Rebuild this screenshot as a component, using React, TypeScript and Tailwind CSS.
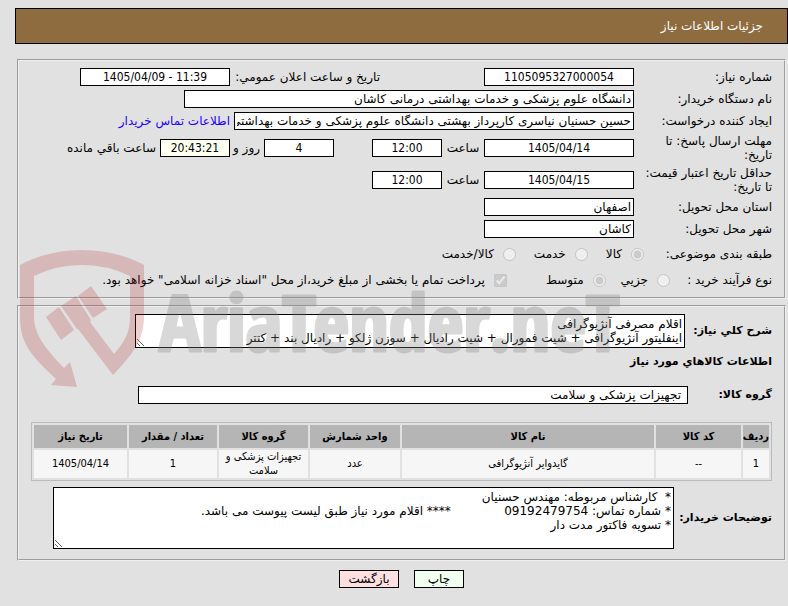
import { useId } from "react";
import type { InputHTMLAttributes, ReactNode } from "react";
import { clsx } from "clsx";

interface ItemRow {
  index: number;
  code: string;
  name: string;
  unit: string;
  group: string;
  amount: string;
  needDate: string;
}

const items: ItemRow[] = [
  {
    index: 1,
    code: "--",
    name: "گایدوایر آنژیوگرافی",
    unit: "عدد",
    group: "تجهیزات پزشکی و سلامت",
    amount: "1",
    needDate: "1405/04/14",
  },
];

const columns = [
  { label: "ردیف", className: "w-[26px]" },
  { label: "کد کالا", className: "w-[85px]" },
  { label: "نام کالا", className: "" },
  { label: "واحد شمارش", className: "w-[90px]" },
  { label: "گروه کالا", className: "w-[89px]" },
  { label: "تعداد / مقدار", className: "w-[88px]" },
  { label: "تاریخ نیاز", className: "w-[93px]" },
];

const summary = `اقلام مصرفی آنژیوگرافی
اینفلیتور آنژیوگرافی + شیت فمورال + شیت رادیال + سوزن ژلکو + رادیال بند + کتتر`;

const notes = `*  کارشناس مربوطه: مهندس حسنیان
* شماره تماس: 09192479754              **** اقلام مورد نیاز طبق لیست پیوست می باشد.
* تسویه فاکتور مدت دار`;

const Field = ({ className, ...rest }: InputHTMLAttributes<HTMLInputElement>) => (
  <input
    type="text"
    readOnly
    className={clsx("h-[18px] shrink-0 border border-black px-0.5 outline-none", className)}
    {...rest}
  />
);

// numbers and dates are centred and set a bit narrower than the text
const NumField = ({ className, ...rest }: InputHTMLAttributes<HTMLInputElement>) => (
  <Field className={clsx("text-center font-['DejaVu_Sans_Condensed',sans-serif]", className)} {...rest} />
);

const Row = ({ label, children }: { label: string; children: (id: string) => ReactNode }) => {
  const id = useId();
  return (
    <div className="flex items-center">
      <label htmlFor={id} className="w-[138px] shrink-0 pe-1">
        {label}
      </label>
      {children(id)}
    </div>
  );
};

const Choice = ({ type, name, label, checked }: { type: "radio" | "checkbox"; name: string; label: string; checked?: boolean }) => (
  <label className="flex shrink-0 items-center gap-[9px] whitespace-nowrap">
    <input type={type} name={name} defaultChecked={checked} disabled className="size-[13px]" />
    {label}
  </label>
);

const Panel = ({ className, children }: { className?: string; children: ReactNode }) => (
  <section className={clsx("ms-[2px] me-[17px] border-2 border-[#f0f0f0] px-3 [border-style:groove]", className)}>
    {children}
  </section>
);

const Watermark = () => (
  <svg
    aria-hidden="true"
    viewBox="0 0 600 140"
    className="pointer-events-none absolute left-5 top-[249px] h-[140px] w-[600px]"
  >
    <g fill="#b4191e" opacity="0.2">
      <path d="M0 16Q28 1 62 1Q96 1 124 16V67C124 91 113 105 93 126L58 80L57 80L41 57L56 47L71 71L70 73L94 105C105 92 110 84 110 67V27Q88 16 62 16Q36 16 14 27V67C14 85 24 98 44 119L50 113L57 138L31 136L36 130C8 104 0 92 0 67Z" />
      <path d="M26 68L39 58L54 81L41 91Z" />
      <path d="M58 47L71 37L87 60L73 69Z" />
    </g>
    <g fill="#808080" stroke="#808080" strokeWidth="3" strokeLinejoin="round" opacity="0.3">
      <text
        x="139"
        y="102"
        direction="ltr"
        className="text-[78px] font-bold font-['Open_Sans_Condensed','Roboto_Condensed',sans-serif]"
      >
        AriaTender.neT
      </text>
    </g>
  </svg>
);

export default function App() {
  return (
    <div
      dir="rtl"
      className="relative min-h-screen bg-[#e1e1e1] pt-2 pb-4 font-['DejaVu_Sans',sans-serif] text-[12px] leading-[14px] text-black [&_input]:bg-white [&_textarea]:bg-white"
    >
      <header className="me-[15px] flex h-9 items-center border border-black bg-[#8f6c3f] ps-6 text-white">
        <h1>جزئیات اطلاعات نیاز</h1>
      </header>

      <Panel className="mt-[15px] flex flex-col gap-1 py-[7px]">
        <Row label="شماره نیاز:">
          {(id) => (
            <>
              <NumField id={id} className="w-[150px]" defaultValue="1105095327000054" />
              <label htmlFor="announce" className="w-[254px] shrink-0 whitespace-nowrap ps-[104px]">
                تاریخ و ساعت اعلان عمومي:
              </label>
              <NumField id="announce" dir="ltr" className="w-[150px]" defaultValue="1405/04/09 - 11:39" />
            </>
          )}
        </Row>
        <Row label="نام دستگاه خریدار:">
          {(id) => <Field id={id} className="w-[450px]" defaultValue="دانشگاه علوم پزشکی و خدمات بهداشتی درمانی کاشان" />}
        </Row>
        <Row label="ایجاد کننده درخواست:">
          {(id) => (
            <>
              <Field
                id={id}
                className="w-[400px]"
                defaultValue="حسین حسنیان نیاسری کارپرداز بهشتی دانشگاه علوم پزشکی و خدمات بهداشتی درمانی کاشان"
              />
              <a href="#contact" className="ms-1 whitespace-nowrap text-[#2200ff]">
                اطلاعات تماس خریدار
              </a>
            </>
          )}
        </Row>
        <Row label="مهلت ارسال پاسخ: تا تاریخ:">
          {(id) => (
            <>
              <NumField id={id} className="w-[150px]" defaultValue="1405/04/14" />
              <label htmlFor="replyTime" className="w-[42px] shrink-0 text-center">ساعت</label>
              <NumField id="replyTime" className="w-[70px]" defaultValue="12:00" />
              <NumField id="days" className="ms-[38px] w-[70px]" defaultValue="4" />
              <label htmlFor="days" className="w-[34px] shrink-0 whitespace-nowrap ps-1">روز و</label>
              <NumField id="remaining" className="w-[70px] bg-[#fffff0]!" defaultValue="20:43:21" />
              <label htmlFor="remaining" className="ms-1 whitespace-nowrap">ساعت باقي مانده</label>
            </>
          )}
        </Row>
        <Row label="حداقل تاریخ اعتبار قیمت: تا تاریخ:">
          {(id) => (
            <>
              <NumField id={id} className="w-[150px]" defaultValue="1405/04/15" />
              <label htmlFor="priceTime" className="w-[42px] shrink-0 text-center">ساعت</label>
              <NumField id="priceTime" className="w-[70px]" defaultValue="12:00" />
            </>
          )}
        </Row>
        <Row label="استان محل تحویل:">{(id) => <Field id={id} className="w-[150px]" defaultValue="اصفهان" />}</Row>
        <Row label="شهر محل تحویل:">{(id) => <Field id={id} className="w-[150px]" defaultValue="کاشان" />}</Row>

        <div role="radiogroup" aria-labelledby="subject" className="flex h-6 items-center gap-[18px]">
          <span id="subject" className="w-[110px] shrink-0 whitespace-nowrap">طبقه بندی موضوعی:</span>
          <Choice type="radio" name="subject" label="کالا" checked />
          <Choice type="radio" name="subject" label="خدمت" />
          <Choice type="radio" name="subject" label="کالا/خدمت" />
        </div>
        <div role="radiogroup" aria-labelledby="process" className="flex h-5 items-center gap-[15px]">
          <span id="process" className="w-[87px] shrink-0 whitespace-nowrap">نوع فرآیند خرید :</span>
          <Choice type="radio" name="process" label="جزیي" />
          <Choice type="radio" name="process" label="متوسط" checked />
          <div className="ms-6">
            <Choice
              type="checkbox"
              name="treasury"
              checked
              label='پرداخت تمام یا بخشی از مبلغ خرید،از محل "اسناد خزانه اسلامی" خواهد بود.'
            />
          </div>
        </div>
      </Panel>

      <Panel className="mt-1.5 pt-[7px] pb-[10px]">
        <div className="flex items-center">
          <label htmlFor="summary" className="w-[87px] shrink-0 whitespace-nowrap text-[11px] font-bold">شرح كلي نیاز:</label>
          <textarea
            id="summary"
            readOnly
            className="h-[34px] w-[550px] overflow-hidden border border-black p-0.5 outline-none"
            defaultValue={summary}
          />
        </div>
        <h2 className="mt-[7px] text-[11px] font-bold">اطلاعات كالاهاي مورد نیاز</h2>
        <div className="mt-[17px] flex items-center">
          <label htmlFor="group" className="w-[84px] shrink-0 text-[11px] font-bold">گروه کالا:</label>
          <Field id="group" className="w-[550px] ps-1.5" defaultValue="تجهیزات پزشکی و سلامت" />
        </div>

        <table className="mt-[18px] w-full table-fixed border-separate border-spacing-0.5 border border-[#bbb] text-center text-[11px] font-['DejaVu_Sans_Condensed',sans-serif]">
          <thead>
            <tr className="h-[23px] bg-[#b5b5b5]">
              {columns.map((c) => (
                <th key={c.label} scope="col" className={clsx("whitespace-nowrap p-0 font-bold", c.className)}>
                  {c.label}
                </th>
              ))}
            </tr>
          </thead>
          <tbody>
            {items.map((it) => (
              <tr key={it.index} className="h-7 bg-[#f6f6f6]">
                <td className="p-0">{it.index}</td>
                <td className="p-0">{it.code}</td>
                <td className="p-0">{it.name}</td>
                <td className="p-0">{it.unit}</td>
                <td className="p-0">{it.group}</td>
                <td className="p-0">{it.amount}</td>
                <td className="p-0">{it.needDate}</td>
              </tr>
            ))}
          </tbody>
        </table>

        <div className="mt-1.5 flex items-center">
          <label htmlFor="notes" className="w-[98px] shrink-0 whitespace-nowrap text-[11px] font-bold">توضیحات خریدار:</label>
          <textarea
            id="notes"
            readOnly
            className="h-[62px] w-[621px] overflow-hidden border border-black p-0.5 outline-none"
            defaultValue={notes}
          />
        </div>
      </Panel>

      <div className="me-[15px] mt-[9px] flex justify-center gap-[15px]">
        <button type="button" className="h-[18px] w-[50px] border border-black bg-[#f0fff0]">چاپ</button>
        <button type="button" className="h-[18px] w-[60px] border border-black bg-[#ffdfdf]">بازگشت</button>
      </div>

      <Watermark />
    </div>
  );
}
